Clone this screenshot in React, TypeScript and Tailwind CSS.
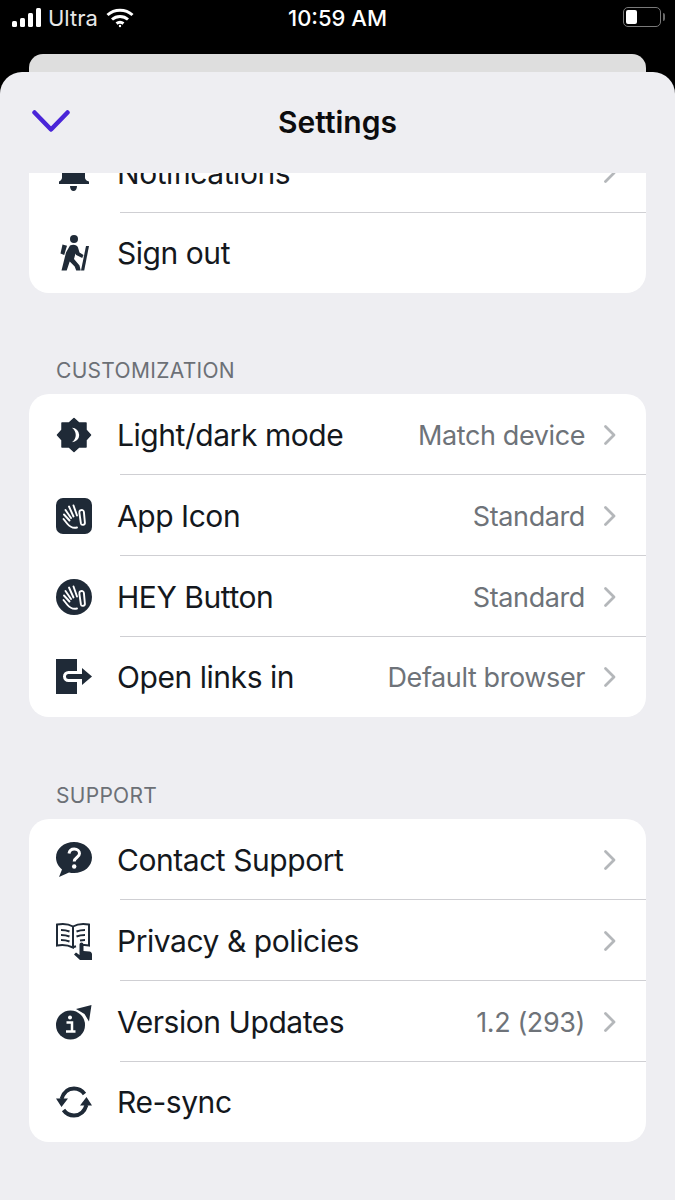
import type { ReactNode } from 'react';

const INK = '#1f2a37';

// ── Icons ─────────────────────────────────────────────────────────────────────

const Bell = () => (
  <svg width="36" height="36" viewBox="0 0 36 36" fill={INK}>
    <path d="M6 8h23v15c0 1.500 2 3 4 3.500V29H3v-2.500c1-.5 3-2 3-3.500z" />
    <path d="M14 31h7c0 3-1.500 5-3.500 5S14 34 14 31z" />
  </svg>
);

const Hiker = () => (
  <svg width="36" height="40" viewBox="0 0 36 40" fill={INK}>
    <circle cx="18" cy="6" r="4" />
    <path d="M14 12.500c3-1.500 7-1 8 2l1.500 5 4 2.500-1.300 3-6-3-.7-1.500-1.500 5.500 5.500 6.500 1.200 5h-4.500l-1.500-4-5-5-3 9H5.500l4.500-18z" />
    <path d="M6.500 11.500l4.500 1.200-2.800 9.300-3.700-1.500z" />
    <path d="M30 13h3l-4.800 24.500h-3.200z" />
  </svg>
);

const Contrast = () => (
  <svg width="36" height="36" viewBox="0 0 36 36">
    <path
      fill={INK}
      stroke={INK}
      strokeWidth="1.500"
      strokeLinejoin="round"
      d="M18 1.500l5 4.500h7v7l4.500 5-4.500 5v7h-7l-5 4.500-5-4.500H6v-7l-4.500-5L6 13V6h7z"
    />
    <path fill="#fff" d="M16 10.800a7.200 7.200 0 1 1 0 14.400 8.800 8.800 0 0 0 0-14.400z" />
  </svg>
);

const HandStrokes = () => (
  <g fill="none" stroke="#fff" strokeWidth="1.900" strokeLinecap="round" strokeLinejoin="round">
    <path d="M7.500 21l4 5c2.500 3 5.500 4.500 9.500 3.500" />
    <path d="M8 16.500l5.500 6M9.500 12l5.500 8M13 8.500l4.500 10M17.500 7.500l3.500 10" />
    <path d="M24 12.500c1.800-1 3.600-.4 3.900 1.300l1 11c.1 2.400-3.600 2.900-4 .6l-1.500-10.400c-.1-1 0-1.900.6-2.500z" />
  </g>
);

const AppIcon = () => (
  <svg width="36" height="36" viewBox="0 0 36 36">
    <rect width="36" height="36" rx="7" fill={INK} />
    <HandStrokes />
  </svg>
);

const HeyButton = () => (
  <svg width="36" height="36" viewBox="0 0 36 36">
    <circle cx="18" cy="18" r="18" fill={INK} />
    <HandStrokes />
  </svg>
);

const OpenLinks = () => (
  <svg width="36" height="36" viewBox="0 0 36 36">
    <rect x="0" y="0" width="21" height="35" fill={INK} />
    <path d="M21 12H12.500a5.500 5.500 0 0 0 0 11H21z" fill="#fff" />
    <path d="M12.500 17.500h15" stroke={INK} strokeWidth="5" strokeLinecap="round" />
    <path d="M26 9l10 8.500L26 26z" fill={INK} />
  </svg>
);

const Help = () => (
  <svg width="36" height="36" viewBox="0 0 36 36">
    <path
      fill={INK}
      d="M18 0c10 0 18 6.500 18 15.500S28 31 18 31c-2 0-3.500-.2-5-.6L3 35l3-7.500C2.500 24.500 0 20.500 0 15.500 0 6.500 8 0 18 0z"
    />
    <path
      d="M13 11.500c.5-3 2.800-4.500 5.300-4.500 3 0 5.200 1.900 5.200 4.500 0 4-5.300 4-5.300 8"
      fill="none"
      stroke="#fff"
      strokeWidth="3"
    />
    <circle cx="18.200" cy="24.500" r="2.200" fill="#fff" />
  </svg>
);

const Book = () => (
  <svg width="36" height="38" viewBox="0 0 36 38">
    <g fill="none" stroke={INK} strokeWidth="2">
      <path d="M1 2.500c5-1 11-1 16 2v21c-5-2.500-11-3-16-2zM17 4.500c5-3 11-3 16-2v21c-2-.4-4-.5-6-.4M17 25.500c1-.6 2-1 3-1.300" />
      <path d="M5 8c3 0 6 .5 8.500 1.500M5 13c3 0 6 .5 8.500 1.500M5 18c3 0 6 .5 8.500 1.500M20.500 9.500C23 8.500 26 8 29 8M20.500 14.500c2.500-1 5.500-1.500 8.500-1.500M24 18.500c1.500-.3 3-.5 5-.5" />
    </g>
    <path
      fill={INK}
      d="M23.500 22.500c0-2.800 4-2.800 4 0V29l6 .5c1.500.2 2.500 1.300 2.500 3V38H24l-6-5.500 2-2 3.500 2.500z"
    />
  </svg>
);

const Info = () => (
  <svg width="36" height="36" viewBox="0 0 36 36">
    <path d="M20 5L35.500 1 33 17.500 28.500 10z" fill={INK} />
    <circle cx="14.500" cy="21" r="14.500" fill={INK} />
    <circle cx="14" cy="13.500" r="2" fill="#fff" />
    <path d="M10.500 18.500h5.500v9M10 27.500h9.500" fill="none" stroke="#fff" strokeWidth="2.500" />
  </svg>
);

const Sync = () => (
  <svg width="36" height="36" viewBox="0 0 36 36">
    <g fill="none" stroke={INK} strokeWidth="4">
      <path d="M5.500 15C7.500 8.500 12 4.500 18 4.500c4.500 0 8 2 10.500 5.500" />
      <path d="M30.500 21c-2 6.500-6.500 10.500-12.500 10.500-4.500 0-8-2-10.500-5.500" />
    </g>
    <path d="M0 14.500h12L5.500 23zM24 21.500h12L30.500 13z" fill={INK} />
  </svg>
);

const Chevron = () => (
  <svg width="14" height="22" viewBox="0 0 14 22" fill="none" stroke="#b4b7ba" strokeWidth="2.800" strokeLinecap="round" strokeLinejoin="round" className="shrink-0">
    <path d="M2.500 2.500L11 11l-8.500 8.500" />
  </svg>
);

// ── Rows ──────────────────────────────────────────────────────────────────────

type RowProps = {
  icon: ReactNode;
  label: string;
  value?: string;
  arrow?: boolean;
  last?: boolean;
};

const Row = ({ icon, label, value, arrow = true, last = false }: RowProps) => (
  <div className={last ? 'flex h-[80px] flex-col' : 'flex h-[81px] flex-col'}>
    <div className={last ? 'flex flex-1 items-center pl-[27px] pr-[29px]' : 'flex flex-1 items-center pl-[27px] pr-[29px] pt-[2px]'}>
      <div className="flex w-[36px] shrink-0 items-center justify-center">{icon}</div>
      <span className="ml-[25px] text-[30px] leading-none tracking-[-0.45px] text-[#14181d]">{label}</span>
      {value && <span className="ml-auto text-[27px] leading-none tracking-[-0.4px] text-[#6e7379]">{value}</span>}
      {arrow && <span className={value ? 'ml-[18px]' : 'ml-auto'}><Chevron /></span>}
    </div>
    {!last && <div className="ml-[91px] h-px bg-[#cfcfd3]" />}
  </div>
);

const SectionLabel = ({ children, className }: { children: string; className: string }) => (
  <div className={`mb-[11px] pl-[27px] text-[21px] leading-[24px] tracking-[0.3px] text-[#6c7076] ${className}`}>{children}</div>
);

// ── Screen ────────────────────────────────────────────────────────────────────

export default function App() {
  return (
    <div className="flex h-[1200px] w-[675px] flex-col overflow-hidden bg-black font-['Inter',sans-serif]">
      {/* status bar */}
      <div className="flex h-[54px] shrink-0 items-start justify-between pl-[12px] pr-[10px] pt-[5px] text-white">
        <div className="flex w-[200px] items-center gap-[6px]">
          <svg width="30" height="20" viewBox="0 0 30 20" fill="#fff">
            <rect x="0" y="13" width="5" height="6" rx="1.500" />
            <rect x="8" y="10" width="5" height="9" rx="1.500" />
            <rect x="16" y="5" width="5" height="14" rx="1.500" />
            <rect x="24" y="0" width="5" height="19" rx="1.500" />
          </svg>
          <span className="text-[22px] leading-[26px] text-[#e8e8e8]">Ultra</span>
          <svg width="28" height="20" viewBox="0 0 28 20" fill="none" stroke="#fff" strokeWidth="3" className="ml-[2px]">
            <path d="M1.500 7c7-6.500 18-6.500 25 0M6 11.500c4.500-4 11.500-4 16 0M10.500 15.500c2-1.500 5-1.500 7 0" />
            <circle cx="14" cy="18" r="1.200" fill="#fff" stroke="none" />
          </svg>
        </div>
        <span className="text-[22px] font-medium leading-[26px]">10:59 AM</span>
        <div className="flex w-[202px] justify-end pt-[2px]">
          <div className="flex h-[20px] w-[38px] items-center rounded-[5px] border border-[#7a7a7a] p-[2px]">
            <div className="h-full w-[11px] rounded-[2px] bg-white" />
          </div>
          <div className="ml-[2px] mt-[6px] h-[8px] w-[2px] rounded-r-sm bg-[#6a6a6a]" />
        </div>
      </div>

      {/* stacked sheets */}
      <div className="flex flex-1 flex-col">
        <div className="mx-[29px] h-[18px] shrink-0 rounded-t-[14px] bg-[#dedede]" />
        <div className="flex flex-1 flex-col overflow-hidden rounded-t-[22px] bg-[#eeeef2]">
          <div className="flex h-[101px] shrink-0 items-center px-[32px] pb-[2px]">
            <svg width="38" height="23" viewBox="0 0 38 23" fill="none" stroke="#4a25d8" strokeWidth="4.500" strokeLinecap="round" strokeLinejoin="round">
              <path d="M2.500 2.500L19 19.500l16.500-17" />
            </svg>
            <span className="ml-[208px] text-[30px] font-semibold leading-none text-[#0c0c0e]">Settings</span>
          </div>

          <div className="min-h-0 flex-1 overflow-hidden">
            <div className="-mt-[41px] px-[29px]">
              <div className="overflow-hidden rounded-[20px] bg-white">
                <Row icon={<Bell />} label="Notifications" />
                <Row icon={<Hiker />} label="Sign out" arrow={false} last />
              </div>

              <SectionLabel className="mt-[66px]">CUSTOMIZATION</SectionLabel>
              <div className="overflow-hidden rounded-[20px] bg-white">
                <Row icon={<Contrast />} label="Light/dark mode" value="Match device" />
                <Row icon={<AppIcon />} label="App Icon" value="Standard" />
                <Row icon={<HeyButton />} label="HEY Button" value="Standard" />
                <Row icon={<OpenLinks />} label="Open links in" value="Default browser" last />
              </div>

              <SectionLabel className="mt-[67px]">SUPPORT</SectionLabel>
              <div className="overflow-hidden rounded-[20px] bg-white">
                <Row icon={<Help />} label="Contact Support" />
                <Row icon={<Book />} label="Privacy & policies" />
                <Row icon={<Info />} label="Version Updates" value="1.2 (293)" />
                <Row icon={<Sync />} label="Re-sync" arrow={false} last />
              </div>
            </div>
          </div>
        </div>
      </div>
    </div>
  );
}
